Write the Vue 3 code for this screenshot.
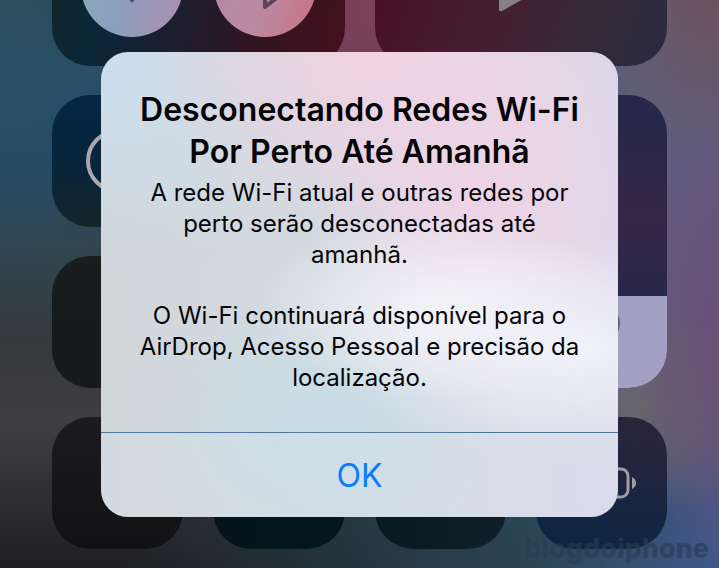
<template>
  <main class="screen">
    <div class="control-center" aria-hidden="true">
      <section class="tile connectivity">
        <div class="round wifi">
          <svg viewBox="0 0 102 102">
            <path d="M43 59 Q51 53 59 59 L52 67 Q51 68 50 67 Z" fill="#50516a" />
            <path d="M34 50 Q51 36 68 50 M25 41 Q51 19 77 41" fill="none" stroke="#50516a" stroke-width="5" />
          </svg>
        </div>
        <div class="round bluetooth">
          <svg viewBox="0 0 102 102">
            <path d="M37 40 L65 61 L51 72 V30 L65 41 L37 62" fill="none" stroke="#59465a" stroke-width="4" stroke-linejoin="round" />
          </svg>
        </div>
      </section>

      <section class="tile media">
        <svg class="play" viewBox="0 0 44 48">
          <path d="M0 2 Q0 0 2 1 L42 23 Q44 24 42 25 L3 47 Q0 48 0 46 Z" fill="#898083" />
        </svg>
      </section>

      <section class="tile rotation">
        <svg class="lock" viewBox="0 0 64 64">
          <circle cx="32" cy="32" r="30" fill="none" stroke="#aaa8ad" stroke-width="4" />
        </svg>
      </section>
      <section class="tile silent"></section>
      <section class="tile volume"></section>
      <section class="tile brightness">
        <div class="level" :style="{ height: brightness + '%' }">
          <svg class="sun" viewBox="0 0 38 38">
            <circle cx="19" cy="19" r="19" fill="#62617e" />
          </svg>
        </div>
      </section>
      <section class="tile focus"></section>

      <section class="tile torch"></section>
      <section class="tile timer"></section>
      <section class="tile calculator"></section>
      <section class="tile power">
        <svg class="battery" viewBox="0 0 72 32">
          <rect x="2" y="2" width="61" height="28" rx="7" fill="none" stroke="#a09da5" stroke-width="3" />
          <path d="M67 10 Q71 12 71 16 Q71 20 67 22 Z" fill="#a09da5" />
        </svg>
      </section>
    </div>

    <span class="watermark">blogdoiphone</span>

    <div class="alert" role="alertdialog" aria-labelledby="alert-title" aria-describedby="alert-message">
      <div class="alert-body">
        <h1 id="alert-title">Desconectando Redes Wi-Fi<br>Por Perto Até Amanhã</h1>
        <div id="alert-message">
          <p v-for="(lines, i) in message" :key="i">
            <template v-for="(line, n) in lines" :key="line"><br v-if="n">{{ line }}</template>
          </p>
        </div>
      </div>
      <button type="button" class="ok">OK</button>
    </div>
  </main>
</template>

<script setup>
const brightness = 31.4

const message = [
  ['A rede Wi-Fi atual e outras redes por', 'perto serão desconectadas até', 'amanhã.'],
  ['O Wi-Fi continuará disponível para o', 'AirDrop, Acesso Pessoal e precisão da', 'localização.']
]
</script>

<style>
body {
  margin: 0;
  background: #1c1b1d;
}
</style>

<style scoped>
.screen {
  position: relative;
  display: grid;
  min-height: 100vh;
  overflow: hidden;
  font-family: Inter, "Noto Sans", sans-serif;
  background:
    radial-gradient(ellipse 36% 34% at 52% 2%, #7c4158 0%, rgba(122, 64, 88, 0.85) 40%, transparent 100%),
    radial-gradient(ellipse 16% 42% at 104% 60%, #6c4f77 0%, rgba(106, 79, 118, 0.75) 40%, transparent 100%),
    radial-gradient(ellipse 26% 20% at 88% 71%, #68656d 0%, rgba(104, 101, 109, 0.7) 40%, transparent 100%),
    radial-gradient(ellipse 24% 30% at 102% 0%, #70505a 0%, transparent 100%),
    radial-gradient(ellipse 34% 52% at 0% 12%, rgba(40, 82, 106, 0.6) 0%, transparent 100%),
    radial-gradient(ellipse 44% 38% at 92% 48%, #635b80 0%, rgba(99, 91, 128, 0.8) 50%, transparent 100%),
    radial-gradient(ellipse 50% 50% at 92% 12%, #58627f 0%, rgba(88, 98, 127, 0.9) 50%, transparent 100%),
    linear-gradient(90deg, transparent 15%, rgba(36, 58, 70, 0.7) 45%, rgba(44, 74, 92, 0.9) 75%, #40588a 100%),
    linear-gradient(180deg, #2c4a51 0%, #2a4d66 14%, #234663 27%, #33444c 43%, #353739 60%, #403f42 74%, #1f1e20 100%);
}

.screen > * {
  grid-area: 1 / 1;
}

.control-center {
  display: grid;
  grid-template-columns: repeat(4, 1fr);
  grid-template-rows: 66px repeat(3, 132px);
  align-content: start;
  gap: 29px 30px;
  padding: 0 52px 19px;
}

.tile {
  display: flex;
  align-items: center;
  justify-content: center;
  min-width: 0;
  overflow: hidden;
  border-radius: 38px;
}

.connectivity,
.media {
  grid-column: span 2;
  align-items: flex-end;
  border-radius: 0 0 38px 38px;
}

.connectivity {
  justify-content: space-between;
  padding: 0 29px 29px;
  background: linear-gradient(100deg, #10262d 0%, #0a2638 16%, #211c2d 48%, #32151f 70%, #45101f 100%);
}

.media {
  background: linear-gradient(110deg, #481125 0%, #432030 45%, #352a38 70%, #292a41 100%);
}

.round {
  flex: none;
  width: 102px;
  height: 102px;
  border-radius: 50%;
}

.wifi {
  background: linear-gradient(110deg, #87abbd 10%, #8b9fbe 45%, #a592b2 85%);
}

.bluetooth {
  background: linear-gradient(110deg, #b38bab 10%, #bc899f 55%, #c6768a 90%);
}

.play {
  width: 44px;
  height: 48px;
  margin-bottom: 54px;
}

.rotation {
  background: linear-gradient(180deg, #032746 0%, #08253a 55%, #15252a 100%);
}

.lock {
  width: 64px;
  height: 64px;
}

.silent {
  background: #13232c;
}

.volume,
.brightness {
  grid-row: span 2;
  align-items: flex-end;
}

.volume {
  background: #36293d;
}

.brightness {
  background: linear-gradient(180deg, #25284a 0%, #342646 42%, #26284b 75%);
}

.level {
  display: flex;
  justify-content: center;
  align-items: center;
  width: 100%;
  background: linear-gradient(100deg, #9ba2c2, #a59fc4);
}

.sun {
  width: 38px;
  height: 38px;
  margin-bottom: 38px;
}

.focus {
  grid-column: 1 / span 2;
  background: linear-gradient(180deg, #1b1d1e, #141919 60%, #17191a);
}

.torch {
  background: linear-gradient(180deg, #1c1c20, #111113);
}

.timer {
  background: linear-gradient(100deg, #06131b, #02171f);
}

.calculator {
  background: linear-gradient(100deg, #08181e, #10202b);
}

.power {
  background: linear-gradient(190deg, #2c2439 0%, #1c2541 50%, #092640 100%);
}

.battery {
  width: 72px;
  height: 32px;
}

.watermark {
  position: absolute;
  right: 10px;
  bottom: 3px;
  font-size: 27px;
  font-weight: 800;
  line-height: 32px;
  color: rgba(40, 60, 84, 0.65);
}

.alert {
  display: flex;
  flex-direction: column;
  place-self: center;
  width: 72%;
  overflow: hidden;
  border-radius: 27px;
  text-align: center;
  color: #050507;
  background:
    radial-gradient(ellipse 36% 20% at 66% 55%, #f3f3f7 0%, rgba(243, 243, 248, 0.6) 45%, transparent 100%),
    radial-gradient(ellipse 46% 24% at 92% 64%, #f0f1f9 0%, rgba(240, 241, 249, 0.6) 45%, transparent 100%),
    radial-gradient(ellipse 34% 46% at 74% 30%, #efd3e6 0%, rgba(238, 212, 230, 0.7) 45%, transparent 100%),
    radial-gradient(ellipse 45% 40% at 54% 0%, #f5d1df 0%, rgba(240, 210, 224, 0.5) 55%, transparent 100%),
    radial-gradient(ellipse 45% 50% at 0% 0%, #cbdfef 0%, transparent 100%),
    radial-gradient(ellipse 35% 30% at 42% 80%, #c7dde7 0%, transparent 100%),
    linear-gradient(90deg, #d2d6d9 0%, #d2dbe2 50%, #dad8ea 100%);
}

.alert-body {
  padding: 37px 30px 39px;
}

h1,
p {
  margin: 0;
  white-space: nowrap;
}

h1 {
  font-size: 32px;
  font-weight: 600;
  line-height: 42px;
}

#alert-message {
  display: grid;
  gap: 30px;
  padding-top: 4px;
  font-size: 24px;
  line-height: 31px;
}

.ok {
  min-height: 85px;
  padding: 2px 0 0;
  border: 0;
  border-top: 1px solid #52799a;
  font: inherit;
  font-size: 32px;
  color: #087cff;
  background: rgba(216, 226, 234, 0.35);
  cursor: pointer;
}
</style>
